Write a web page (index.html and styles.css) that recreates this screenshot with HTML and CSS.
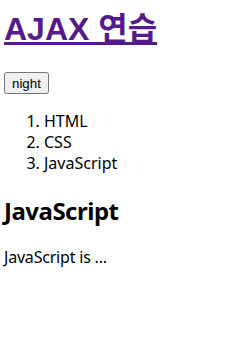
FILE: index.html
```html
<!DOCTYPE html>
<html lang="ko">
<head>
    <meta charset="UTF-8">
    <title>AJAX 연습</title>
    <link rel="stylesheet" href="styles.css">
</head>
<body>
    <h1 class="title"><a href="index.html" class="title-link">AJAX 연습</a></h1>
    <div class="mode">
        <input class="mode-btn" id="night_day" type="button" value="night" onclick="toggleMode(this)">
    </div>
    <ol class="nav">
        <li>HTML</li>
        <li>CSS</li>
        <li>JavaScript</li>
    </ol>
    <article class="content">
        <h2 class="content-title">JavaScript</h2>
        <p class="content-text">JavaScript is ...</p>
    </article>
    <script>
        function toggleMode(self) {
            if (self.value === 'night') {
                document.body.className = 'dark';
                self.value = 'day';
            } else {
                document.body.className = '';
                self.value = 'night';
            }
        }
    </script>
</body>
</html>
```

FILE: styles.css
```css
body {
    margin: 0;
    padding: 0 4px;
    font-family: "Noto Sans", "Noto Sans CJK KR", sans-serif;
    font-size: 16px;
    line-height: 21px;
    color: #000;
    background: #fff;
}

body.dark {
    background: #000;
    color: #fff;
}

.title {
    margin: 11px 0 0;
    font-family: "Liberation Sans", "Noto Sans CJK KR", sans-serif;
    font-size: 32px;
    line-height: 37px;
    font-weight: bold;
}

.title-link {
    color: #551a8b;
    text-decoration-thickness: 3px;
    text-underline-offset: 2px;
}

.mode {
    display: flex;
    margin-top: 24px;
}

.mode-btn {
    font-family: "Liberation Sans", Arial, sans-serif;
    font-size: 13.333px;
    height: 22px;
}

.nav {
    margin: 17px 0 0;
    padding-left: 40px;
}

.content-title {
    margin: 23px 0 0;
    font-size: 24px;
    line-height: 28px;
    font-weight: bold;
    letter-spacing: -0.5px;
}

.content-text {
    margin: 22px 0 0;
    letter-spacing: -0.2px;
}
```
